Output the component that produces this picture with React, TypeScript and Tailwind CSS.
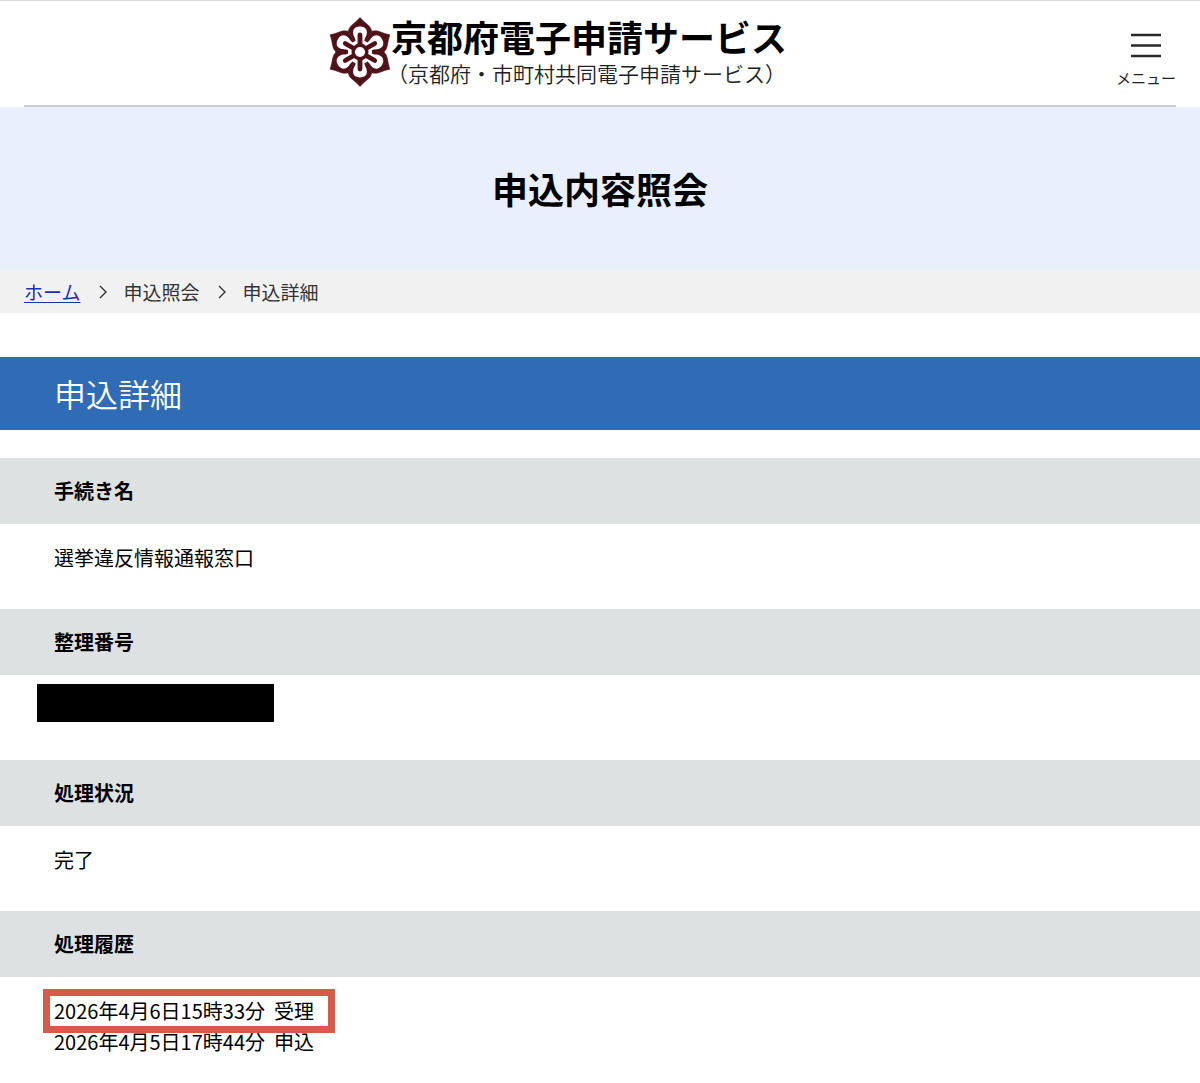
import { Fragment, type ReactNode } from 'react';

const breadcrumbs = ['申込照会', '申込詳細'];

const history = [
  { date: '2026年4月6日15時33分', status: '受理', highlighted: true },
  { date: '2026年4月5日17時44分', status: '申込', highlighted: false },
];

const petalAngles = [0, 60, 120, 180, 240, 300];

function Emblem() {
  return (
    <svg viewBox="-31 -35 62 70" className="w-[62px] h-[70px] shrink-0" aria-hidden="true">
      {petalAngles.map(angle => (
        <g key={angle} transform={`rotate(${angle})`}>
          <path
            d="M0 0 L-12 -20.8 Q-11 -25 -7.5 -27.5 Q-3.5 -30.5 0 -34.5 Q3.5 -30.5 7.5 -27.5 Q11 -25 12 -20.8 Z"
            fill="#4f1219"
            stroke="#4f1219"
            strokeWidth="0.5"
          />
        </g>
      ))}
      <circle r="12" fill="#fff" />
      {petalAngles.map(angle => (
        <g key={angle} transform={`rotate(${angle})`}>
          <path
            d="M0 -8 L-4.5 -11 C-4.5 -14.5 -6.9 -15.5 -6.9 -19.8 C-6.9 -23.4 -4 -25.5 0 -25.5 C4 -25.5 6.9 -23.4 6.9 -19.8 C6.9 -15.5 4.5 -14.5 4.5 -11 Z"
            fill="#fff"
          />
          <path d="M0 -7 V-17" stroke="#4f1219" strokeWidth="4.8" strokeLinecap="round" />
        </g>
      ))}
      <circle r="6.8" fill="#fff" stroke="#4f1219" strokeWidth="3.4" />
    </svg>
  );
}

function Chevron() {
  return (
    <svg viewBox="0 0 8 14" className="w-2 h-3.5 ml-[19px] mr-4" fill="none" stroke="#333" strokeWidth="1.4" aria-hidden="true">
      <path d="M1 1 L7 7 L1 13" />
    </svg>
  );
}

function Row({ label, children }: { label: string; children: ReactNode }) {
  return (
    <div>
      <dt className="bg-[#dde1e2] pl-[54px] pr-6 py-[17px] text-[20px] leading-8 font-bold">{label}</dt>
      <dd className="pl-[54px] pr-6 pt-[18px] pb-9 text-[20px] leading-[31px]">{children}</dd>
    </div>
  );
}

export default function App() {
  return (
    <div className="min-h-screen bg-white text-black font-['Noto_Sans_CJK_JP','Noto_Sans',sans-serif]">
      <header className="px-6 border-t border-[#d8d8da]">
        <div className="flex items-center h-[106px] border-b-2 border-[#cfccd6]">
          <div className="flex-1 flex items-center justify-center pl-1 pb-0.5">
            <Emblem />
            <div className="pt-0.5">
              <p className="text-[36px] leading-10 font-bold whitespace-nowrap">京都府電子申請サービス</p>
              <p className="-ml-1 text-[21px] leading-[34px] font-[350] text-[#222] whitespace-nowrap">（京都府・市町村共同電子申請サービス）</p>
            </div>
          </div>
          <button type="button" className="ml-7 pt-4 flex flex-col items-center gap-2 text-[15px] leading-6 text-[#222]">
            <svg viewBox="0 0 30 25" className="w-[30px] h-[25px]" stroke="#2a2a2a" strokeWidth="2.6" aria-hidden="true">
              <path d="M0 2 H30 M0 12.5 H30 M0 23 H30" />
            </svg>
            メニュー
          </button>
        </div>
      </header>

      <div className="bg-[#e9effc] py-14 text-center">
        <h1 className="text-[36px] leading-[51px] font-bold">申込内容照会</h1>
      </div>

      <nav aria-label="パンくず" className="flex items-center px-6 py-1.5 bg-[#f1f1f1] text-[19px] leading-[31px] text-[#333]">
        <a href="#" className="text-[#1f2fb4] underline underline-offset-2">ホーム</a>
        {breadcrumbs.map(item => (
          <Fragment key={item}>
            <Chevron />
            <span>{item}</span>
          </Fragment>
        ))}
      </nav>

      <main className="pt-11">
        <h2 className="bg-[#2f6cb5] pl-[54px] pr-6 py-3 text-[32px] leading-[49px] font-[350] text-white">申込詳細</h2>

        <dl className="mt-7">
          <Row label="手続き名">選挙違反情報通報窓口</Row>
          <Row label="整理番号">
            {/* Number is masked */}
            <span className="relative block h-[31px]">
              <span className="absolute -top-[9px] -left-[17px] w-[237px] h-[38px] bg-black" />
            </span>
          </Row>
          <Row label="処理状況">完了</Row>
          <Row label="処理履歴">
            {history.map(entry => (
              <div key={entry.date}>
                <span className="relative inline-block whitespace-pre">
                  {entry.date}{'  '}{entry.status}
                  {entry.highlighted && (
                    <span className="absolute -top-1.5 -bottom-[7px] -left-[11px] -right-[21px] z-10 border-[7px] border-[#d85a4a]" />
                  )}
                </span>
              </div>
            ))}
          </Row>
        </dl>
      </main>
    </div>
  );
}
